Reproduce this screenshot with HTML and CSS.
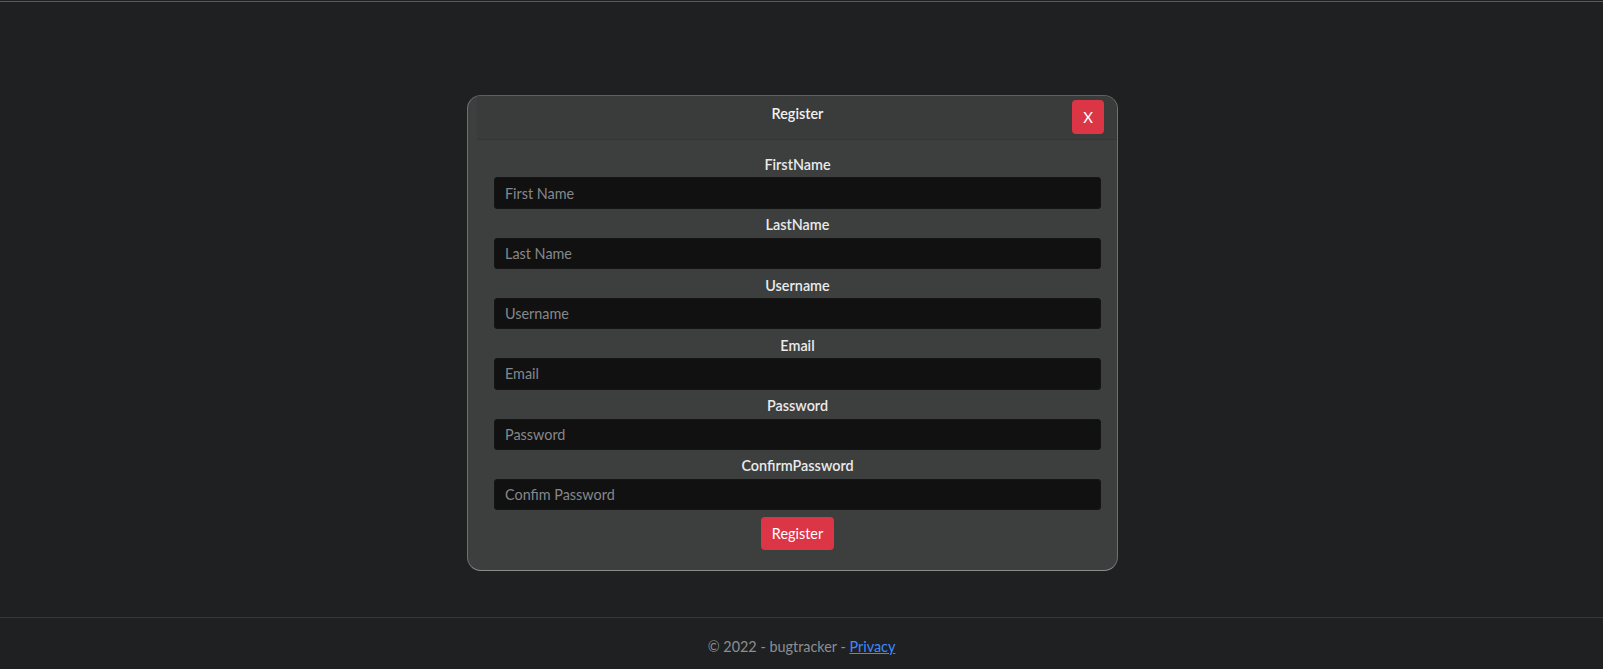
FILE: index.html
```html
<!DOCTYPE html>
<html lang="en">
<head>
<meta charset="utf-8">
<title>Register - bugtracker</title>
<link rel="stylesheet" href="styles.css">
</head>
<body>
<div class="topbar"></div>
<main class="main">
  <div class="modal">
    <div class="modal-inner">
      <div class="modal-header">
        <span></span>
        <h5 class="modal-title">Register</h5>
        <button class="btn btn-close" type="button">X</button>
      </div>
      <form class="modal-body">
        <div class="group">
          <label class="label" for="fn">FirstName</label>
          <input class="input" id="fn" type="text" placeholder="First Name">
        </div>
        <div class="group">
          <label class="label" for="ln">LastName</label>
          <input class="input" id="ln" type="text" placeholder="Last Name">
        </div>
        <div class="group">
          <label class="label" for="un">Username</label>
          <input class="input" id="un" type="text" placeholder="Username">
        </div>
        <div class="group">
          <label class="label" for="em">Email</label>
          <input class="input" id="em" type="text" placeholder="Email">
        </div>
        <div class="group">
          <label class="label" for="pw">Password</label>
          <input class="input" id="pw" type="password" placeholder="Password">
        </div>
        <div class="group">
          <label class="label" for="cpw">ConfirmPassword</label>
          <input class="input" id="cpw" type="password" placeholder="Confim Password">
        </div>
        <div class="actions">
          <button class="btn btn-submit" type="button">Register</button>
        </div>
      </form>
    </div>
  </div>
</main>
<footer class="footer">
  &copy; 2022 - bugtracker - <a href="#" class="link">Privacy</a>
</footer>
</body>
</html>
```

FILE: styles.css
```css
* { box-sizing: border-box; }

html, body {
  margin: 0;
  padding: 0;
}

body {
  background: #1f2022;
  color: #e6e6e6;
  font-family: "Lato", "Liberation Sans", sans-serif;
  font-size: 14.4px;
  line-height: 1.5;
  height: 669px;
  overflow: hidden;
}

.topbar {
  height: 2px;
  border-top: 1px solid #1f2022;
  background: #5a5b5d;
}

.main {
  display: flex;
  justify-content: center;
  padding-top: 93px;
  padding-right: 18px;
}

.modal {
  width: 651px;
  height: 476px;
  background: #3d3f3e;
  border: 1px solid #6f7070;
  border-top-color: #5e5f5f;
  border-bottom-color: #8a8b8b;
  border-radius: 14px;
  overflow: hidden;
}

.modal-inner {
  margin-left: 9px;
}

.modal-header {
  display: grid;
  grid-template-columns: 1fr auto 1fr;
  align-items: start;
  padding: 4px 13px 5px 14px;
  background: #3a3b3b;
  border-bottom: 1px solid #353636;
}

.modal-title {
  margin: 0;
  padding-top: 3px;
  font-size: 14.4px;
  font-weight: 600;
  line-height: 21.6px;
  color: #f2f2f2;
}

.btn {
  font-family: inherit;
  border: none;
  border-radius: 4px;
  background: #dc3545;
  color: #ffffff;
  cursor: pointer;
}

.btn-close {
  justify-self: end;
  width: 32px;
  height: 34px;
  padding: 0;
  font-size: 15px;
}

.modal-body {
  padding: 14px 16px 0 17px;
  margin: 0;
}

.group {
  display: flex;
  flex-direction: column;
  margin-bottom: 5.4px;
}

.label {
  text-align: center;
  font-weight: 600;
  line-height: 21.6px;
  margin-bottom: 1.9px;
  color: #eaeaea;
}

.input {
  height: 31.4px;
  background: #111111;
  border: 1px solid #151515;
  border-radius: 3px;
  padding: 0 10px;
  font-family: inherit;
  font-size: 14.4px;
  color: #e6e6e6;
  outline: none;
}

.input::placeholder {
  color: #85888b;
}

.actions {
  display: flex;
  justify-content: center;
  padding-top: 1.2px;
}

.btn-submit {
  height: 33.4px;
  padding: 0 11px;
  font-size: 14.4px;
}

.footer {
  margin-top: 46px;
  border-top: 1px solid #38393b;
  padding-top: 18px;
  text-align: center;
  color: #8b8f93;
  line-height: 21px;
}

.link {
  color: #3d8bfd;
  text-decoration: underline;
}
```
